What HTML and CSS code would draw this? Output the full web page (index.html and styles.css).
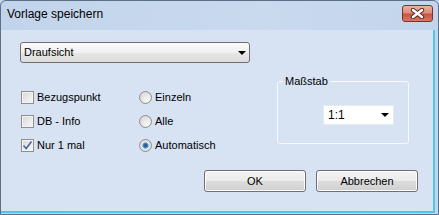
FILE: index.html
```html
<!DOCTYPE html>
<html lang="de">
<head>
<meta charset="utf-8">
<title>Vorlage speichern</title>
<link rel="stylesheet" href="styles.css">
</head>
<body>
<div class="window">
  <div class="titlebar">
    <span class="title">Vorlage speichern</span>
    <div class="close">
      <svg width="15" height="11" viewBox="0 0 15 11">
        <path d="M3 2 L12 9 M12 2 L3 9" stroke="#5a2a22" stroke-width="4.4" stroke-linecap="round"/>
        <path d="M3 2 L12 9 M12 2 L3 9" stroke="#ffffff" stroke-width="2.4" stroke-linecap="round"/>
      </svg>
    </div>
  </div>
  <div class="client">
    <div class="combo combo-main">
      <span class="combo-text">Draufsicht</span>
      <span class="arrow"></span>
    </div>
    <div class="middle">
      <div class="options">
        <label class="opt"><span class="check"></span><span>Bezugspunkt</span></label>
        <label class="opt"><span class="radio"></span><span>Einzeln</span></label>
        <label class="opt"><span class="check"></span><span>DB - Info</span></label>
        <label class="opt"><span class="radio"></span><span>Alle</span></label>
        <label class="opt"><span class="check checked"><svg width="11" height="11" viewBox="0 0 11 11"><path d="M1.5 5.5 L4.2 8.5 L9.5 1.5" fill="none" stroke="#4a66a0" stroke-width="1.6"/></svg></span><span>Nur 1 mal</span></label>
        <label class="opt"><span class="radio selected"></span><span>Automatisch</span></label>
      </div>
      <div class="group">
        <span class="group-label">Maßstab</span>
        <div class="combo combo-scale">
          <span class="combo-text">1:1</span>
          <span class="arrow"></span>
        </div>
      </div>
    </div>
    <div class="buttons">
      <div class="btn">OK</div>
      <div class="btn">Abbrechen</div>
    </div>
  </div>
</div>
</body>
</html>
```

FILE: styles.css
```css
html, body {
  margin: 0;
  padding: 0;
  background: #c6d7ed;
}
body {
  font-family: "Liberation Sans", Arial, sans-serif;
  font-size: 11px;
  color: #000;
}
.window {
  width: 439px;
  height: 215px;
  box-sizing: border-box;
  border: 1px solid #5d6f86;
  border-radius: 6px 6px 0 0;
  background: linear-gradient(90deg, #c2d4eb 0%, #c9daef 60%, #c3d5ec 100%);
  display: flex;
  flex-direction: column;
  overflow: hidden;
}
.titlebar {
  height: 29px;
  flex: none;
  display: flex;
  align-items: flex-start;
  padding-left: 6px;
  box-sizing: border-box;
}
.title {
  font-size: 12px;
  line-height: 14px;
  margin-top: 6px;
}
.close {
  margin-left: auto;
  margin-right: 5px;
  margin-top: 4px;
  width: 31px;
  height: 17px;
  box-sizing: border-box;
  border: 1px solid #7b342b;
  border-radius: 3px;
  background: linear-gradient(180deg, #eab2a6 0%, #df8c7c 45%, #c9553f 55%, #d8786a 100%);
  display: flex;
  align-items: center;
  justify-content: center;
}
.close svg { display: block; }
.client {
  flex: 1;
  margin-right: 3px;
  margin-bottom: 1px;
  border-right: 2px solid #4cc8ef;
  border-bottom: 2px solid #4cc8ef;
  background: #d7e2f2;
  padding: 12px 15px 0 19px;
  display: flex;
  flex-direction: column;
}
.combo {
  box-sizing: border-box;
  display: flex;
  align-items: center;
  position: relative;
}
.combo-main {
  width: 230px;
  height: 21px;
  border: 1px solid #707070;
  border-radius: 3px;
  background: linear-gradient(180deg, #fbfbfb 0%, #f0f0f0 50%, #e6e6e6 51%, #dcdcdc 100%);
  padding-left: 3px;
}
.combo-text {
  flex: 1;
  line-height: 13px;
}
.arrow {
  width: 0;
  height: 0;
  border-left: 4px solid transparent;
  border-right: 4px solid transparent;
  border-top: 4px solid #000;
  margin-right: 3px;
}
.middle {
  margin-top: 18px;
  display: flex;
  align-items: flex-start;
}
.options {
  margin-top: 4px;
  margin-left: 1px;
  display: grid;
  grid-template-columns: 118px 120px;
  grid-auto-rows: 24px;
}
.opt {
  display: flex;
  align-items: center;
  gap: 3px;
}
.check {
  width: 13px;
  height: 13px;
  box-sizing: border-box;
  border: 1px solid #8e8f8f;
  background: linear-gradient(135deg, #d6d6d6 0%, #e9e9e9 50%, #f8f8f8 100%);
  box-shadow: inset 0 0 0 1px #f4f4f4;
  display: flex;
  align-items: center;
  justify-content: center;
}
.check svg { display: block; }
.radio {
  width: 13px;
  height: 13px;
  box-sizing: border-box;
  border: 1px solid #8e8f8f;
  border-radius: 50%;
  background: radial-gradient(circle at 65% 70%, #fdfdfd 0%, #e6e6e6 45%, #cfcfcf 100%);
  position: relative;
}
.radio.selected {
  background: radial-gradient(circle at 50% 50%, #1d4f86 0%, #2d73b5 24%, #6fb0e4 36%, #e6e6e6 46%, #d6d6d6 100%);
}
.group {
  margin-left: 18px;
  width: 132px;
  height: 63px;
  box-sizing: border-box;
  border: 1px solid #f7f9fc;
  border-radius: 3px;
  position: relative;
  padding: 23px 0 0 45px;
}
.group-label {
  position: absolute;
  top: -7px;
  left: 5px;
  padding: 0 2px;
  background: #d7e2f2;
  line-height: 12px;
}
.combo-scale {
  width: 71px;
  height: 20px;
  border: 1px solid #e4ebf3;
  background: #fff;
  padding-left: 4px;
  font-size: 12px;
}
.combo-scale .arrow {
  margin-right: 4px;
}
.buttons {
  margin-top: 13px;
  display: flex;
  justify-content: flex-end;
  gap: 10px;
}
.btn {
  width: 102px;
  height: 22px;
  box-sizing: border-box;
  border: 1px solid #707070;
  border-radius: 3px;
  background: linear-gradient(180deg, #f4f4f4 0%, #ebebeb 49%, #dddddd 50%, #cfcfcf 100%);
  box-shadow: inset 0 0 0 1px #fcfcfc;
  display: flex;
  align-items: center;
  justify-content: center;
  line-height: 13px;
}
```
